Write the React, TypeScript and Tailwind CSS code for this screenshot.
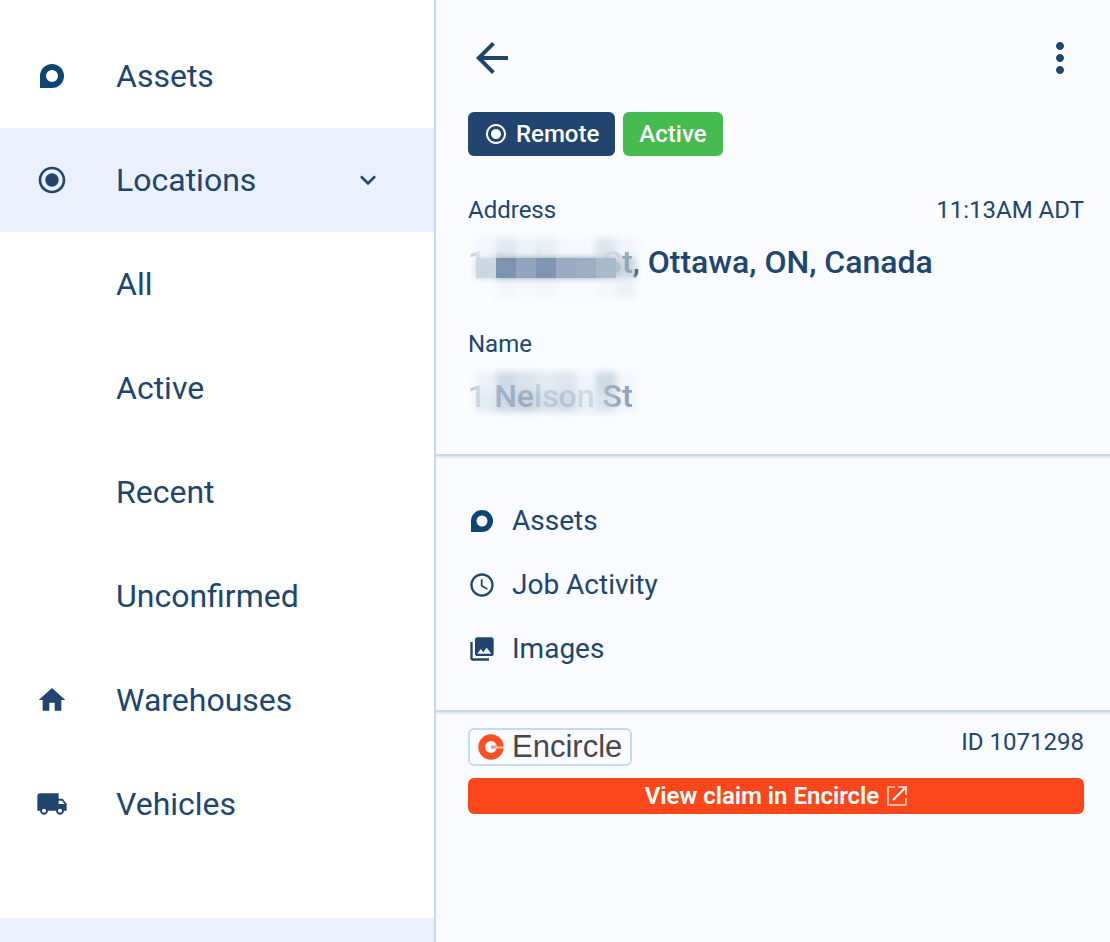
import React from "react";
import {
  MdAccessTime,
  MdArrowBack,
  MdExpandMore,
  MdHome,
  MdLocalShipping,
  MdMoreVert,
  MdPhotoLibrary,
  MdRadioButtonChecked,
} from "react-icons/md";

const AssetIcon = ({ className }: { className?: string }) => (
  <svg viewBox="0 0 24 24" className={className} aria-hidden="true">
    <path
      fill="#0f4575"
      fillRule="evenodd"
      d="M12 0a12 12 0 1 1 0 24H0V12A12 12 0 0 1 12 0Zm0 6a6 6 0 1 0 0 12a6 6 0 0 0 0-12Z"
    />
  </svg>
);

const EncircleLogo = () => (
  <svg viewBox="0 0 26 26" className="size-[26px]" aria-hidden="true">
    <circle cx="13" cy="13" r="9.3" fill="none" stroke="#fb4f22" strokeWidth="6.800" />
    <path d="M13 11.500h5v3h-5Z" fill="#fc8f72" />
    <path d="M17 12.500h9v2h-9Z" fill="#fdc3b3" />
  </svg>
);

const OpenIcon = () => (
  <svg viewBox="0 0 20 20" className="size-5" fill="none" stroke="#fff" aria-hidden="true">
    <path
      d="M8 1H2.500Q1 1 1 2.500V17.500Q1 19 2.500 19H17.500Q19 19 19 17.500V12"
      strokeWidth="2"
      opacity=".6"
    />
    <path d="M6 14L17.500 2.500" strokeWidth="2" />
    <path d="M11 1h8v8" strokeWidth="2" opacity=".7" />
  </svg>
);

const BlockRow = ({ colors }: { colors: string[] }) => (
  <span className="flex">
    {colors.map((color, i) => (
      <span key={i} className="size-5" style={{ backgroundColor: color }} />
    ))}
  </span>
);

// hides part of an address behind 20px blocks, soft ones first and solid ones on top
const Redacted = ({ soft, solid }: { soft: string[][]; solid?: string[] }) => (
  <span className="absolute -top-1 left-2" aria-hidden="true">
    <span className="flex flex-col blur-[3px]">
      {soft.map((row, i) => (
        <BlockRow key={i} colors={row} />
      ))}
    </span>
    {solid && (
      <span className="absolute top-5 left-0">
        <BlockRow colors={solid} />
      </span>
    )}
  </span>
);

const addressSoft = [
  ["#f1f4facc", "#dde5efdd", "#edf1f8dd", "#e5ebf5dd", "#f3f6fbdd", "#f3f6fbdd", "#d5dde8bb", "#e6ebf366"],
  ["#cdd7e2", "#8fa4bc", "#93a5bd", "#8fa4bc", "#9aabc3", "#9eaec5", "#a9bbca", "#a9bbca99"],
  ["#f9fbff", "#f4f7fb", "#f5f8fc", "#f4f7fb", "#f6f9fd", "#f6f9fd", "#f4f7fb", "#eef2f7"],
];
const addressSolid = ["#cdd7e2", "#7c94b0", "#93a5bd", "#7f96b2", "#9aabc3", "#9eaec5", "#a9bbca"];

const nameSoft = [
  ["#e6ecf4aa", "#bac9d9aa", "#cbd6e3aa", "#dce4edbb", "#d3dde8bb", "#edf1f7bb", "#b8c7d7aa", "#e6ecf455"],
  ["#dbe3ecaa", "#b9c8d8aa", "#b4c3d4aa", "#cdd8e3bb", "#c3d0debb", "#e4eaf2bb", "#ccd7e3aa", "#dfe6ee55"],
];

const navRow = "flex h-[104px] items-center text-[32px] leading-10";

const Sidebar = () => (
  <aside className="flex w-[436px] shrink-0 flex-col border-r-2 border-[#c3daf0] bg-white">
    <nav className="pt-6">
      <a href="#assets" className={navRow}>
        <span className="flex w-[116px] pl-10">
          <AssetIcon className="size-6" />
        </span>
        Assets
      </a>
      <button className={`${navRow} w-full bg-[#eaf1fd]`} aria-expanded="true">
        <span className="flex w-[116px] pl-9">
          <MdRadioButtonChecked className="size-8" />
        </span>
        Locations
        <MdExpandMore className="mr-[50px] ml-auto size-8" />
      </button>
      {["All", "Active", "Recent", "Unconfirmed"].map((item) => (
        <a key={item} href={`#${item.toLowerCase()}`} className={`${navRow} pl-[116px]`}>
          {item}
        </a>
      ))}
      <a href="#warehouses" className={navRow}>
        <span className="flex w-[116px] pl-9">
          <MdHome className="size-8" />
        </span>
        Warehouses
      </a>
      <a href="#vehicles" className={navRow}>
        <span className="flex w-[116px] pl-9">
          <MdLocalShipping className="size-8" />
        </span>
        Vehicles
      </a>
    </nav>
    <div className="mt-auto h-6 bg-[#eaf1fd]" />
  </aside>
);

const Divider = () => (
  <div className="h-1 border-t-2 border-b-2 border-t-[#c3daf0] border-b-[#e7e8ea]" />
);

export default function App() {
  return (
    <div className="flex min-h-screen bg-[#f9fbff] font-[Roboto,sans-serif] text-[#20456f]">
      <Sidebar />
      <main className="min-w-0 flex-1">
        <section className="pt-[34px] pr-[26px] pb-[38px] pl-8">
          <header className="flex justify-between">
            <button aria-label="Back">
              <MdArrowBack className="size-12" />
            </button>
            <button aria-label="More options">
              <MdMoreVert className="size-12" />
            </button>
          </header>
          <div className="mt-[30px] flex gap-2 text-2xl font-medium text-white">
            <span className="flex h-11 items-center gap-2 rounded-md bg-[#20456f] px-4">
              <MdRadioButtonChecked className="size-6" />
              Remote
            </span>
            <span className="flex h-11 items-center rounded-md bg-[#46bb50] px-4">Active</span>
          </div>
          <div className="mt-[38px] flex justify-between text-2xl">
            <span>Address</span>
            <span>11:13AM ADT</span>
          </div>
          <h1 className="relative mt-4 text-[32px] leading-10 font-medium">
            <span className="text-[#c3cfdc]">1 Nelson S</span>
            <span className="text-[#6482a2]">t</span>, Ottawa, ON, Canada
            <Redacted soft={addressSoft} solid={addressSolid} />
          </h1>
          <p className="mt-[46px] text-2xl">Name</p>
          <p className="relative mt-4 text-[32px] leading-10 font-medium text-[#6482a2]">
            <span className="text-[#b9c7d6]">1</span> Ne
            <span className="text-[#8fa6be]">lson</span> St
            <Redacted soft={nameSoft} />
          </p>
        </section>
        <Divider />
        <ul className="flex flex-col gap-6 px-8 pt-[43px] pb-[41px] text-[28px] leading-10">
          <li>
            <a href="#location-assets" className="flex items-center gap-4">
              <span className="flex w-7 justify-center">
                <AssetIcon className="size-[22px]" />
              </span>
              Assets
            </a>
          </li>
          <li>
            <a href="#job-activity" className="flex items-center gap-4">
              <MdAccessTime className="size-7" />
              Job Activity
            </a>
          </li>
          <li>
            <a href="#images" className="flex items-center gap-4">
              <MdPhotoLibrary className="size-7" />
              Images
            </a>
          </li>
        </ul>
        <Divider />
        <section className="pt-[14px] pr-[26px] pl-8">
          <div className="flex items-start justify-between">
            <span className="flex h-[38px] items-center gap-2 rounded-md border-2 border-[#c3daf0] px-2 font-['Liberation_Sans',sans-serif] text-[31px] leading-8 text-[#48484a]">
              <EncircleLogo />
              Encircle
            </span>
            <span className="text-2xl leading-7">ID 1071298</span>
          </div>
          <a
            href="#claim"
            className="mt-3 flex h-9 items-center justify-center gap-2 rounded-md bg-[#fb471b] text-2xl font-semibold text-white"
          >
            View claim in Encircle
            <OpenIcon />
          </a>
        </section>
      </main>
    </div>
  );
}
